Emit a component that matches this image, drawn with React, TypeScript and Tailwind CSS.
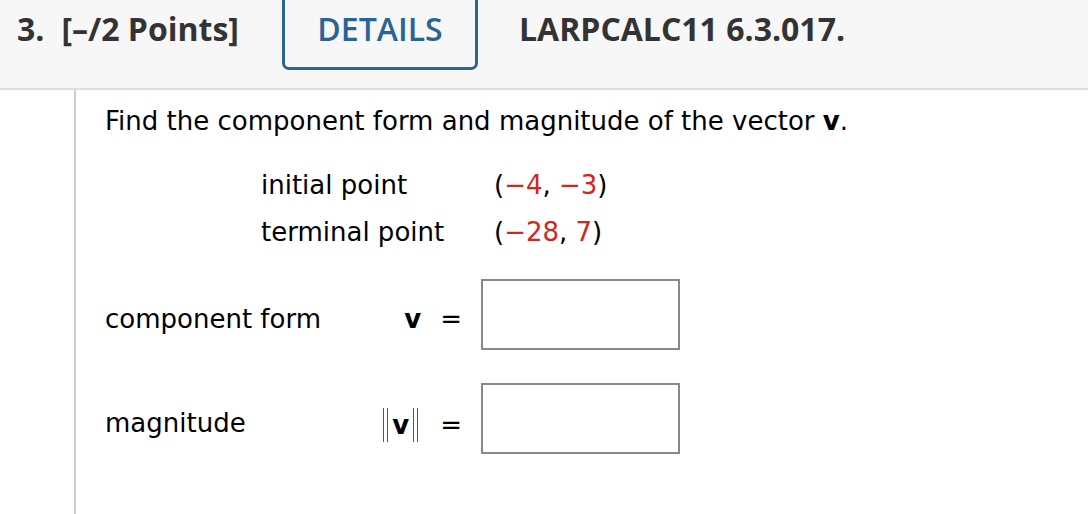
export default function App() {
  const body = { fontFamily: '"DejaVu Sans", Verdana, sans-serif' }

  return (
    <div className="w-[1088px] h-[514px] bg-white overflow-hidden">
      {/* header */}
      <div
        className="flex items-start h-[90px] bg-[#f7f7f7] border-b-2 border-[#dddddd] text-[#333333]"
        style={{ fontFamily: '"Open Sans", sans-serif' }}
      >
        <div className="flex items-center w-[282px] h-[58px] pl-[17px] text-[32px] font-bold">
          <span>3.</span>
          <span className="ml-[17px]">[–/2 Points]</span>
        </div>
        <div className="flex items-center justify-center w-[196px] h-[70px] pb-[10px] border-x-[3px] border-b-[3px] border-[#2a6496] rounded-b-[7px] text-[32px] font-semibold text-[#2a6496]">
          DETAILS
        </div>
        <div className="flex items-center h-[58px] ml-[41px] text-[32px] font-bold">LARPCALC11 6.3.017.</div>
      </div>

      {/* question */}
      <div className="ml-[74px] h-[424px] border-l-2 border-[#cccccc] pl-[29px] pt-[16px] text-[26px] text-black" style={body}>
        <p className="leading-[30px]">
          Find the component form and magnitude of the vector <b>v</b>.
        </p>

        <div className="mt-[34px] ml-[156px] grid grid-cols-[233px_auto] gap-y-[17px] leading-[30px]">
          <span>initial point</span>
          <span>
            (<span className="text-[#d0271d]">−4</span>, <span className="text-[#d0271d]">−3</span>)
          </span>
          <span>terminal point</span>
          <span>
            (<span className="text-[#d0271d]">−28</span>, <span className="text-[#d0271d]">7</span>)
          </span>
        </div>

        <div className="mt-[32px] flex items-start leading-[30px]">
          <span className="w-[262px] mt-[25px]">component form</span>
          <span className="w-[114px] mt-[25px] flex justify-end items-center gap-[19px] pr-[19px]">
            <b>v</b>
            <span>=</span>
          </span>
          <div className="w-[199px] h-[71px] border-2 border-[#888888]" />
        </div>

        <div className="mt-[33px] flex items-start leading-[30px]">
          <span className="w-[262px] mt-[25px]">magnitude</span>
          <span className="w-[114px] mt-[25px] flex justify-end items-center gap-[22px] pr-[19px]">
            <span className="flex items-center gap-[4px]">
              <span className="inline-block w-[5px] h-[34px] border-x border-[#555555]" />
              <b>v</b>
              <span className="inline-block w-[5px] h-[34px] border-x border-[#555555]" />
            </span>
            <span>=</span>
          </span>
          <div className="w-[199px] h-[71px] border-2 border-[#888888]" />
        </div>
      </div>
    </div>
  )
}
